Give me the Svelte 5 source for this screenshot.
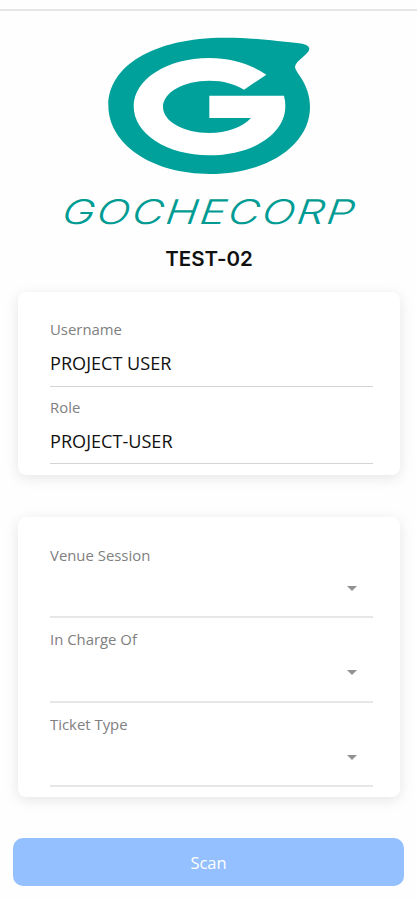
<script>
	const details = [
		{ label: 'Username', value: 'PROJECT USER' },
		{ label: 'Role', value: 'PROJECT-USER' }
	];

	const selects = ['Venue Session', 'In Charge Of', 'Ticket Type'];
</script>

<main>
	<header>
		<svg class="logo" viewBox="36 110 612 414" aria-hidden="true">
			<path
				fill="#00a19a"
				d="M40 315C40 198 174 112 390 112C475 112 550 123 606 128Q643 132 643 145C643 162 600 181 600 200C602 219 645 250 645 320C645 436 514 521 345 521C172 521 40 433 40 315Z"
			/>
			<path
				fill="#fff"
				d="M514 223C467 191 407 173 343 173C215 173 116 238 116 318C116 400 215 465 343 465C475 465 571 400 571 318Q571 300 567 286H343V353H468C440 382 395 398 343 398C265 398 204 363 204 320C204 276 265 241 343 241C385 241 420 251 447 268Z"
			/>
		</svg>
		<svg class="wordmark" viewBox="0 0 310 36">
			<text transform="translate(7 30) skewX(-8)" x="0" y="0" textLength="294" lengthAdjust="spacingAndGlyphs">GOCHECORP</text>
		</svg>
		<h1>TEST-02</h1>
	</header>

	<section class="card details">
		{#each details as { label, value }}
			<div class="field">
				<span class="label">{label}</span>
				<span class="value">{value}</span>
			</div>
		{/each}
	</section>

	<section class="card selects">
		{#each selects as label}
			<div class="field">
				<span class="label">{label}</span>
				<svg class="arrow" viewBox="0 0 10 5" aria-hidden="true">
					<path d="M0 0h10L5 5z" />
				</svg>
			</div>
		{/each}
	</section>

	<button type="button">Scan</button>
</main>

<style>
	:global(body) {
		background: #fefefe;
	}

	main {
		box-sizing: border-box;
		height: 900px;
		padding-top: 9px;
		overflow: hidden;
		font-family: 'Open Sans', 'Noto Sans', sans-serif;
	}

	header {
		display: flex;
		flex-direction: column;
		align-items: center;
		height: 283px;
		box-sizing: border-box;
		border-top: 2px solid #e6e6e6;
	}

	.logo {
		width: 204px;
		height: 138px;
		margin: 26px 0 0 1px;
	}

	.wordmark {
		width: 310px;
		height: 36px;
		margin-top: 19px;
		overflow: visible;
	}

	.wordmark text {
		font: italic 300 34px Inter, sans-serif;
		letter-spacing: 1.5px;
		fill: #009c94;
	}

	h1 {
		margin: 15px 0 0 1px;
		font: 600 20.5px/28px Inter, sans-serif;
		font-feature-settings: 'calt' 0;
		color: #111;
	}

	.card {
		box-sizing: border-box;
		margin: 0 17px 0 18px;
		padding: 0 27px 0 32px;
		border-radius: 8px;
		background: #fff;
		box-shadow: 0 3px 14px rgba(0, 0, 0, 0.1);
	}

	.field {
		display: flex;
		flex-direction: column;
		box-sizing: border-box;
	}

	.details {
		height: 183px;
		padding-top: 17px;
	}

	.details .field {
		height: 77.5px;
		padding-top: 10px;
		border-bottom: 1px solid #d4d4d4;
	}

	.selects {
		height: 280px;
		margin-top: 42px;
		padding-top: 17px;
	}

	.selects .field {
		height: 84.3px;
		padding-top: 11px;
		border-bottom: 2px solid #e7e7e7;
	}

	.label {
		font-size: 14.9px;
		line-height: 21px;
		color: #808080;
	}

	.value {
		margin-top: 10px;
		font-size: 18.1px;
		line-height: 26px;
		color: #111;
	}

	.arrow {
		align-self: flex-end;
		width: 10px;
		height: 5px;
		margin: 20px 16px 0 0;
		fill: #929292;
	}

	button {
		display: block;
		width: 391px;
		height: 48px;
		margin: 41px 0 0 13px;
		padding: 0;
		border: 0;
		border-radius: 10px;
		background: #95c0ff;
		font: 400 16.5px/47px 'Open Sans', sans-serif;
		color: #fff;
	}
</style>
